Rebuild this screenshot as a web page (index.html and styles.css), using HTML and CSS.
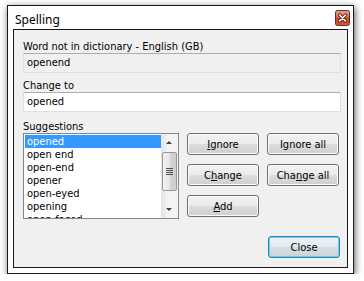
FILE: index.html
```html
<!DOCTYPE html>
<html lang="en">
<head>
    <meta charset="UTF-8">
    <title>Spelling</title>
    <link rel="stylesheet" href="styles.css">
</head>
<body>
    <div class="window">
        <div class="titlebar">
            <span class="title">Spelling</span>
            <span class="close-x">
                <svg width="15" height="16" viewBox="0 0 15 16">
                    <defs>
                        <linearGradient id="red" x1="0" y1="0" x2="0" y2="1">
                            <stop offset="0" stop-color="#e8a493"/>
                            <stop offset="0.45" stop-color="#d66c51"/>
                            <stop offset="0.5" stop-color="#c94524"/>
                            <stop offset="1" stop-color="#d2593a"/>
                        </linearGradient>
                    </defs>
                    <rect x="0.5" y="0.5" width="14" height="15" rx="2" fill="url(#red)" stroke="#6d2a1b"/>
                    <path d="M4.5 5 L10.5 11 M10.5 5 L4.5 11" stroke="#5a2418" stroke-width="3.2" stroke-linecap="round"/>
                    <path d="M4.5 5 L10.5 11 M10.5 5 L4.5 11" stroke="#ffffff" stroke-width="1.6" stroke-linecap="round"/>
                </svg>
            </span>
        </div>
        <div class="panel">
            <div class="field">
                <div class="label">Word not in dictionary - English (GB)</div>
                <div class="textbox readonly">openend</div>
            </div>
            <div class="field">
                <div class="label">Change to</div>
                <div class="textbox">opened</div>
            </div>
            <div class="label suggest-label">Suggestions</div>
            <div class="suggest-row">
                <div class="listbox">
                    <ul class="items">
                        <li class="selected">opened</li>
                        <li>open end</li>
                        <li>open-end</li>
                        <li>opener</li>
                        <li>open-eyed</li>
                        <li>opening</li>
                        <li>open-faced</li>
                    </ul>
                    <div class="scrollbar">
                        <div class="arrow up"></div>
                        <div class="track">
                            <div class="thumb"><span class="grip"></span></div>
                        </div>
                        <div class="arrow down"></div>
                    </div>
                </div>
                <div class="buttons">
                    <button class="btn"><u>I</u>gnore</button>
                    <button class="btn">I<u>g</u>nore all</button>
                    <button class="btn">C<u>h</u>ange</button>
                    <button class="btn">Cha<u>n</u>ge all</button>
                    <button class="btn"><u>A</u>dd</button>
                </div>
            </div>
            <div class="footer">
                <button class="btn default">Close</button>
            </div>
        </div>
    </div>
</body>
</html>
```

FILE: styles.css
```css
:root {
    --dialog: #f0f0f0;
    --frame: #ffffff;
    --dark: #1a1a1a;
    --select: #3399ff;
}

body {
    margin: 0;
    background-color: #ffffff;
    font-family: "DejaVu Sans", sans-serif;
    font-stretch: condensed;
    font-size: 11px;
    color: #000000;
}

.window {
    box-sizing: border-box;
    width: 347px;
    height: 269px;
    margin: 5px 0 0 7px;
    border: 1px solid var(--dark);
    background-color: var(--frame);
    box-shadow: 1px 2px 7px rgba(0, 0, 0, 0.65);
    display: flex;
    flex-direction: column;
}

.titlebar {
    height: 23px;
    display: flex;
    justify-content: space-between;
    align-items: flex-start;
    padding: 0 3px 0 7px;
}

.title {
    font-family: "Noto Sans", sans-serif;
    font-stretch: normal;
    font-size: 12px;
    line-height: 16px;
    margin-top: 6px;
    color: #000000;
}

.close-x {
    display: block;
    margin-top: 4px;
    height: 16px;
}

.panel {
    flex: 1;
    margin: 0 5px 5px 5px;
    border: 1px solid var(--dark);
    background-color: var(--dialog);
    padding: 10px 6px 0 9px;
}

.label {
    line-height: 13px;
    height: 13px;
}

.field {
    margin-bottom: 6px;
}

.textbox {
    box-sizing: border-box;
    height: 20px;
    line-height: 18px;
    padding-left: 3px;
    border: 1px solid #dbdfe6;
    border-top-color: #abadb3;
    background-color: #ffffff;
}

.textbox.readonly {
    background-color: var(--dialog);
}

.suggest-label {
    margin-top: 8px;
}

.suggest-row {
    display: flex;
    gap: 8px;
}

.listbox {
    box-sizing: border-box;
    width: 156px;
    height: 86px;
    border: 1px solid #828790;
    background-color: #ffffff;
    display: flex;
    overflow: hidden;
}

.items {
    list-style: none;
    margin: 0;
    padding: 1px 0 0 1px;
    flex: 1;
}

.items li {
    height: 13px;
    line-height: 13px;
    padding-left: 2px;
    white-space: nowrap;
}

.items li.selected {
    background-color: var(--select);
    color: #ffffff;
}

.scrollbar {
    width: 17px;
    display: flex;
    flex-direction: column;
    background: linear-gradient(to right, #e3e3e3, #f3f3f3 40%, #f3f3f3);
}

.arrow {
    height: 17px;
    position: relative;
}

.arrow::after {
    content: "";
    position: absolute;
    left: 5px;
    border-left: 3px solid transparent;
    border-right: 3px solid transparent;
}

.arrow.up::after {
    top: 7px;
    border-bottom: 3px solid #404040;
}

.arrow.down::after {
    top: 7px;
    border-top: 3px solid #404040;
}

.track {
    flex: 1;
    padding-top: 1px;
}

.thumb {
    box-sizing: border-box;
    height: 39px;
    margin: 0 1px;
    border: 1px solid #979797;
    border-radius: 2px;
    background: linear-gradient(to right, #f2f2f2, #e6e6e6 50%, #d4d4d4 51%, #cfcfcf);
    display: flex;
    justify-content: center;
    align-items: center;
}

.grip {
    width: 7px;
    height: 7px;
    background: repeating-linear-gradient(#4e4e4e 0 1px, transparent 1px 2px);
}

.buttons {
    display: grid;
    grid-template-columns: 72px 72px;
    grid-auto-rows: 22px;
    gap: 9px 8px;
    align-content: start;
}

.btn {
    box-sizing: border-box;
    width: 72px;
    height: 22px;
    padding: 0;
    border: 1px solid #707070;
    border-radius: 3px;
    background: linear-gradient(#f2f2f2 0%, #ebebeb 50%, #dddddd 51%, #cfcfcf 100%);
    box-shadow: inset 0 0 0 1px #fbfbfb;
    font-family: "DejaVu Sans", sans-serif;
    font-stretch: condensed;
    font-size: 11px;
    color: #000000;
}

.btn.default {
    border-color: #3c7fb1;
    box-shadow: inset 0 0 0 1px #5fd0f7;
    background: linear-gradient(#eef2f5 0%, #e4eaee 50%, #d5dde3 51%, #ccd5dc 100%);
}

.footer {
    display: flex;
    justify-content: flex-end;
    margin-top: 17px;
    padding-right: 1px;
}
```
